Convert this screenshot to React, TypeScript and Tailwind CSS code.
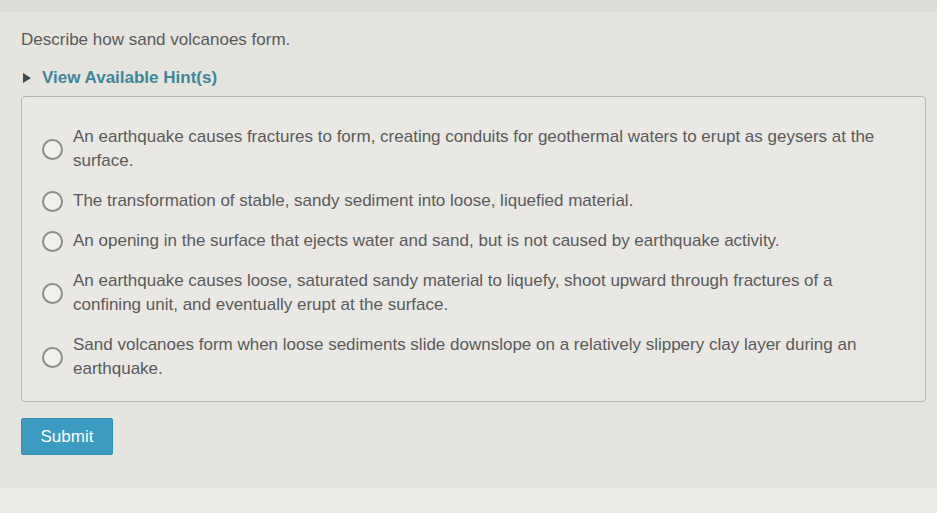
import React from "react";

const options: string[] = [
  "An earthquake causes fractures to form, creating conduits for geothermal waters to erupt as geysers at the surface.",
  "The transformation of stable, sandy sediment into loose, liquefied material.",
  "An opening in the surface that ejects water and sand, but is not caused by earthquake activity.",
  "An earthquake causes loose, saturated sandy material to liquefy, shoot upward through fractures of a confining unit, and eventually erupt at the surface.",
  "Sand volcanoes form when loose sediments slide downslope on a relatively slippery clay layer during an earthquake.",
];

export default function App() {
  return (
    <div
      className="w-[937px] h-[513px] overflow-hidden bg-[#e5e4df] flex flex-col"
      style={{ fontFamily: '"Liberation Sans", Arial, sans-serif' }}
    >
      {/* bande du haut */}
      <div className="h-[12px] bg-[#dddcd7]" />

      <div className="flex-1 pl-[21px] pr-[11px]">
        {/* question */}
        <p className="mt-[16px] text-[17px] leading-[24px] text-[#5a5a5a]">
          Describe how sand volcanoes form.
        </p>

        {/* indice */}
        <button className="mt-[14px] flex items-center gap-[10px] text-[#3d8799] font-bold text-[17px] leading-[24px]">
          <svg width="10" height="12" viewBox="0 0 10 12" className="ml-[1px]">
            <path d="M1 1 L9 6 L1 11 Z" fill="#3e4b50" />
          </svg>
          View Available Hint(s)
        </button>

        {/* choix */}
        <div className="mt-[6px] border border-[#b8b8b3] rounded-[4px] bg-[#e9e8e4] pl-[20px] pr-[36px] pt-[28px] pb-[20px] flex flex-col gap-[16px]">
          {options.map((opt) => (
            <label key={opt} className="flex items-center gap-[10px] cursor-pointer">
              <span className="shrink-0 w-[21px] h-[21px] rounded-full border-[2px] border-[#8c8c8a] bg-[#efefeb]" />
              <span className="text-[17px] leading-[24px] text-[#5a5a5a]">{opt}</span>
            </label>
          ))}
        </div>

        {/* bouton */}
        <button className="mt-[16px] w-[92px] h-[37px] rounded-[2px] bg-[#3c9bc0] text-white text-[17px] border border-[#3390b3]">
          Submit
        </button>
      </div>

      {/* bande du bas */}
      <div className="h-[25px] bg-[#e9e9e6]" />
    </div>
  );
}
